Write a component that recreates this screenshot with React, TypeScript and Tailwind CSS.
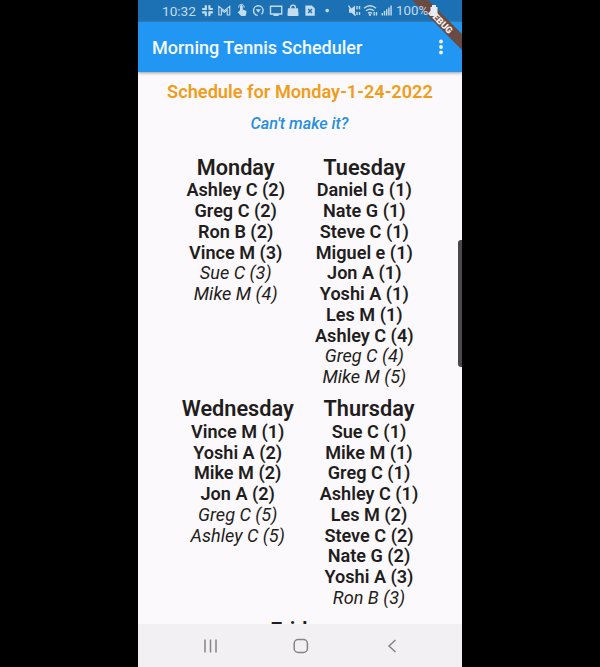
import React from "react";

type Entry = [string, boolean?];

const monday: Entry[] = [["Ashley C (2)"], ["Greg C (2)"], ["Ron B (2)"], ["Vince M (3)"], ["Sue C (3)", true], ["Mike M (4)", true]];
const tuesday: Entry[] = [["Daniel G (1)"], ["Nate G (1)"], ["Steve C (1)"], ["Miguel e (1)"], ["Jon A (1)"], ["Yoshi A (1)"], ["Les M (1)"], ["Ashley C (4)"], ["Greg C (4)", true], ["Mike M (5)", true]];
const wednesday: Entry[] = [["Vince M (1)"], ["Yoshi A (2)"], ["Mike M (2)"], ["Jon A (2)"], ["Greg C (5)", true], ["Ashley C (5)", true]];
const thursday: Entry[] = [["Sue C (1)"], ["Mike M (1)"], ["Greg C (1)"], ["Ashley C (1)"], ["Les M (2)"], ["Steve C (2)"], ["Nate G (2)"], ["Yoshi A (3)"], ["Ron B (3)", true]];

function Day({ name, entries }: { name: string; entries: Entry[] }) {
  return (
    <div className="flex flex-col items-center whitespace-nowrap">
      <h2 className="text-[21.7px] leading-[25.5px] font-semibold">{name}</h2>
      {entries.map(([text, alternate]) => (
        <div key={text} className={alternate ? "text-[18.1px] leading-[20.75px] italic" : "text-[18.1px] leading-[20.75px] font-semibold"}>
          {text}
        </div>
      ))}
    </div>
  );
}

function StatusBar() {
  return (
    <div className="flex h-[22px] shrink-0 items-center bg-[#1c71b4] pl-[24px] text-[13.6px] text-[#c3dcef]">
      <span className="w-[39px]">10:32</span>
      <svg className="h-[22px] w-[132px] shrink-0" viewBox="201 0 132 22" fill="none" stroke="currentColor" strokeWidth="1.4">
        <g strokeWidth="2.2" strokeLinecap="round">
          <path d="M205.8 6v3.2M209.4 6v1.8M203 9h2.8M209.4 9h2.6M203 12.4h2.8M209.4 12.4h2.6M205.8 13.6v1.6M209.4 12.2v3" />
        </g>
        <path d="M218.8 15v-8.6l5.5 4.2 5.5-4.2V15h-2.6v-5l-2.9 2.4-2.9-2.4v5z" strokeWidth="1.1" />
        <path d="M240 10V6.3a1.4 1.4 0 0 1 2.8 0v3.2l3.6 1.4v2l-.8 3h-4.4l-3.6-3.6 1.2-.8z" fill="currentColor" stroke="none" />
        <path d="M238.8 7.7a2.7 2.7 0 1 1 5.2 0" strokeWidth="1" />
        <circle cx="258.3" cy="10.6" r="4.8" strokeDasharray="26 4" strokeDashoffset="-8" />
        <path d="M255.8 9.2h5l-2.5 3.6z" fill="currentColor" stroke="none" />
        <path d="M270.5 6.2h11.2v7.8h-11.2zM273.5 15.4h5.2" />
        <path d="M288 8.3h10l.6 6.8q0 1-1 1h-9.2q-1 0-1-1z" fill="currentColor" stroke="none" />
        <path d="M290.6 8.5v-1a2.4 2.4 0 0 1 4.8 0v1" />
        <path d="M305.4 5.5h6.4l3 2.8v7.5h-9.4z" fill="currentColor" stroke="none" />
        <path d="m308.2 9 3.8 4m0-4-3.8 4" stroke="#1c71b4" />
        <circle cx="327.2" cy="10.6" r="1.8" fill="currentColor" stroke="none" />
      </svg>
      <svg className="ml-[14px] h-[22px] w-[47px] shrink-0" viewBox="347 0 47 22" fill="none" stroke="currentColor" strokeWidth="1.4">
        <path d="M349 8.4h2.5l3.5-3v10.4l-3.5-3H349z" fill="currentColor" stroke="none" />
        <path d="m348.5 5.6 7 10M357 6v3.2m0 2.8v3M359.5 6v3.2m0 2.8v3" />
        <path d="M364 8.2q6-4.8 12 0M366 10.8q4-3 8 0M368 13.2q2-1.5 4 0" />
        <path d="m369 14.2 1 1 1-1M374.2 12v3.5M376.5 12v3.5" />
        <path d="M382.3 15.5V13M384.5 15.5v-4.4M386.7 15.5V9.2M388.9 15.5V7.4M391.1 15.5V5.6" />
      </svg>
      <span className="relative z-30 ml-[2px] text-[13.3px]">100%</span>
    </div>
  );
}

export default function App() {
  return (
    <div className="flex h-[667px] w-[600px] justify-center overflow-hidden bg-black font-[Roboto,sans-serif]">
      <main className="relative flex h-full w-[324px] flex-col overflow-hidden bg-[#fbf9fb] text-[#1f1d20]">
        <StatusBar />
        <header className="z-10 flex h-[50px] shrink-0 items-center justify-between bg-[#2196f3] pr-[19px] pl-[14px] shadow-[0_1px_3px_#999]">
          <h1 className="pt-px text-[18.05px] font-medium text-[#f4faff]">Morning Tennis Scheduler</h1>
          <svg className="h-4 w-1" viewBox="0 0 4 16" fill="#f4faff">
            <circle cx="2" cy="2.5" r="1.9" /><circle cx="2" cy="8" r="1.9" /><circle cx="2" cy="13.5" r="1.9" />
          </svg>
        </header>

        <section className="flex min-h-0 flex-1 flex-col items-center overflow-hidden">
          <p className="mt-[9px] text-[18.2px] leading-[21px] font-semibold text-[#f09d1c]">Schedule for Monday-1-24-2022</p>
          <p className="mt-[13px] pr-px text-[16.2px] leading-[18px] font-medium text-[#278fdd] italic">Can't make it?</p>
          <div className="mt-[21.8px] flex gap-[30px]">
            <Day name="Monday" entries={monday} />
            <Day name="Tuesday" entries={tuesday} />
          </div>
          <div className="mt-[8.5px] flex gap-[26px]">
            <Day name="Wednesday" entries={wednesday} />
            <Day name="Thursday" entries={thursday} />
          </div>
          <div className="mt-[9.5px]">
            <Day name="Friday" entries={[]} />
          </div>
        </section>

        <nav className="flex h-[43px] shrink-0 items-center bg-[#f2f0f2] pb-px">
          <svg className="h-full w-full" viewBox="0 0 324 42" fill="none" stroke="#858386" strokeWidth="1.5">
            <path d="M67 15.5v13M72.5 15.5v13M78 15.5v13" />
            <rect x="156.2" y="15.5" width="13.2" height="13" rx="4" />
            <path d="m257.5 16-6.5 6 6.5 6" />
          </svg>
        </nav>

        <svg className="absolute top-0 right-0 z-20 h-[52px] w-[52px]" viewBox="0 0 52 52">
          <path d="M2 0h16l34 34v16z" fill="#694b43" />
          <text x="30" y="24.5" transform="rotate(45 30 22)" textAnchor="middle" fontSize="9.4" fontWeight="900" fill="#f5eeee">DEBUG</text>
          <path d="M20.5 7h1.5V5h4v2h1.5v9h-7z" fill="#e7edf3" />
        </svg>
        <div className="absolute top-[240px] right-0 h-[127px] w-[4px] rounded-l-[3px] bg-[#4b484b]" />
      </main>
    </div>
  );
}
